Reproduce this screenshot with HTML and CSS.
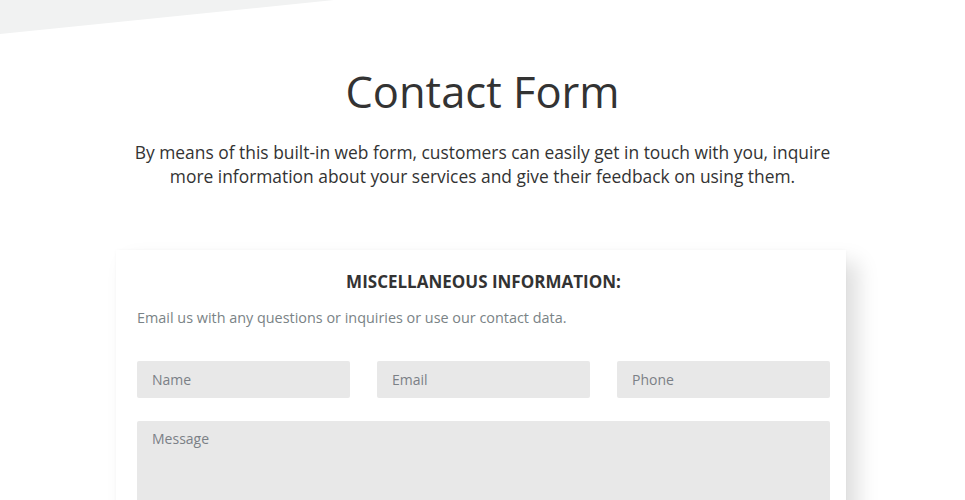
FILE: index.html
```
<!DOCTYPE html>
<html lang="en">
<head>
  <meta charset="UTF-8">
  <meta name="viewport" content="width=device-width, initial-scale=1.0">
  <title>Contact Form</title>
  <link rel="stylesheet" href="styles.css">
</head>
<body>
  <div class="page">
    <div class="intro">
      <h1>Contact Form</h1>
      <p class="lead">By means of this built-in web form, customers can easily get in touch with you, inquire more information about your services and give their feedback on using them.</p>
    </div>

    <div class="card">
      <h3>Miscellaneous information:</h3>
      <p class="note">Email us with any questions or inquiries or use our contact data.</p>
      <form class="form">
        <div class="row">
          <input type="text" placeholder="Name">
          <input type="email" placeholder="Email">
          <input type="tel" placeholder="Phone">
        </div>
        <textarea placeholder="Message"></textarea>
      </form>
    </div>
  </div>
</body>
</html>
```

FILE: styles.css
```
body {
  margin: 0;
  background-color: #fff;
  color: #333;
  font-family: "Open Sans", Arial, sans-serif;
}
.page {
  position: relative;
  overflow: hidden;
  height: 500px;
  padding-top: 62px;
  box-sizing: border-box;
}
.page::before {
  content: "";
  position: absolute;
  top: 0;
  left: 0;
  width: 334px;
  height: 34px;
  background-color: #f1f2f2;
  clip-path: polygon(0 0, 100% 0, 0 100%);
}
.intro {
  position: relative;
  text-align: center;
  max-width: 704px;
  margin: 0 auto;
}
h1 {
  margin: 0;
  font-size: 43.5px;
  font-weight: 400;
  line-height: 60px;
  color: #333;
}
.lead {
  margin: 18px 0 0;
  font-size: 17.4px;
  line-height: 24px;
  font-weight: 400;
  color: #333;
}
.card {
  position: relative;
  width: 730px;
  box-sizing: border-box;
  margin: 62px 0 0 116px;
  padding: 19px 16px 0 21px;
  background-color: #fff;
  box-shadow: 12px 12px 20px rgba(0,0,0,0.13), 0 0 3px rgba(0,0,0,0.03);
}
h3 {
  margin: 0;
  text-align: center;
  font-size: 17px;
  font-weight: 700;
  line-height: 26px;
  text-transform: uppercase;
  color: #333;
}
.note {
  margin: 13px 0 0;
  font-size: 14.4px;
  line-height: 20px;
  color: #7a8386;
}
.form {
  margin-top: 33px;
}
.row {
  display: flex;
  gap: 27px;
  margin-bottom: 23px;
}
input, textarea {
  display: block;
  box-sizing: border-box;
  width: 213px;
  height: 37px;
  padding: 0 15px;
  border: none;
  border-radius: 2px;
  background-color: #e8e8e8;
  font-family: "Open Sans", Arial, sans-serif;
  font-size: 14px;
  color: #555;
}
textarea {
  width: 693px;
  height: 120px;
  padding: 8px 15px;
  resize: none;
}
::placeholder {
  color: #7b8086;
  opacity: 1;
}
```
